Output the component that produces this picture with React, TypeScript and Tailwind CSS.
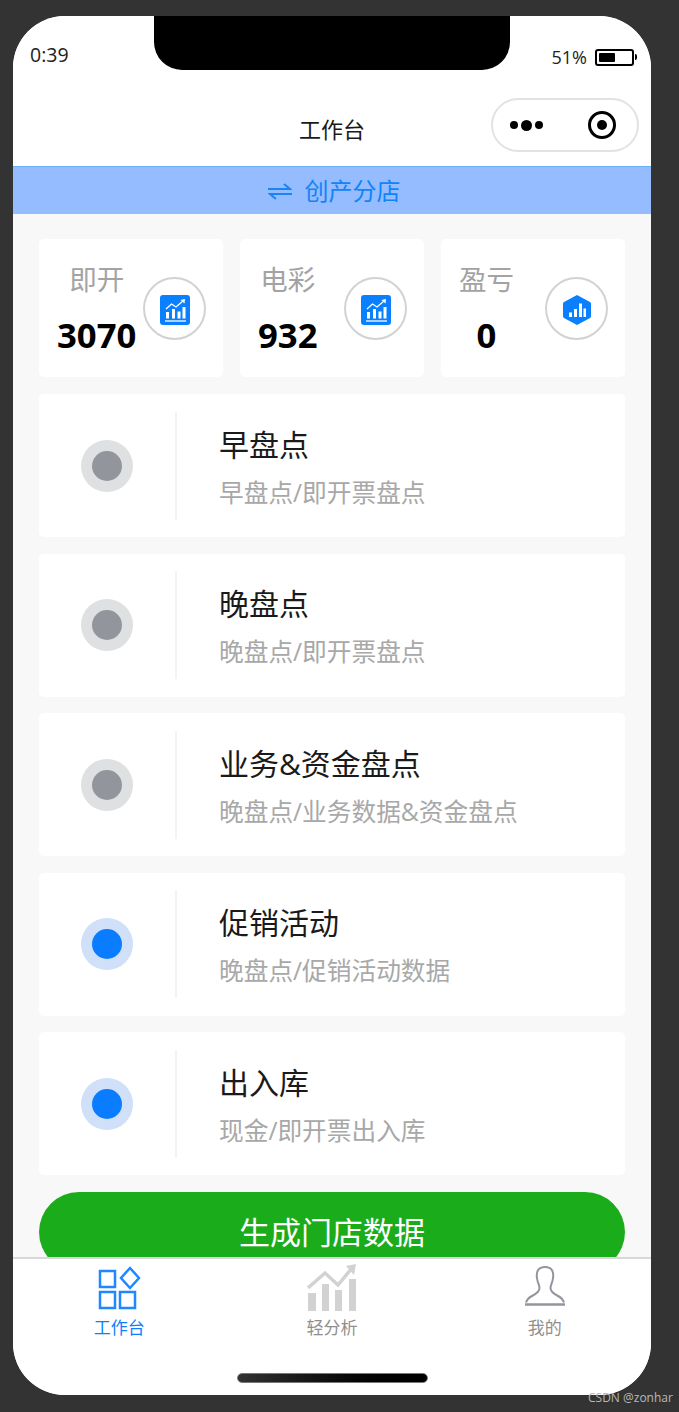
const font = { fontFamily: '"Open Sans", "Noto Sans CJK SC", sans-serif' }

const stats = [
  { label: "即开", value: "3070", icon: "square" },
  { label: "电彩", value: "932", icon: "square" },
  { label: "盈亏", value: "0", icon: "hex" },
]

const tasks = [
  { title: "早盘点", sub: "早盘点/即开票盘点", active: false },
  { title: "晚盘点", sub: "晚盘点/即开票盘点", active: false },
  { title: "业务&资金盘点", sub: "晚盘点/业务数据&资金盘点", active: false },
  { title: "促销活动", sub: "晚盘点/促销活动数据", active: true },
  { title: "出入库", sub: "现金/即开票出入库", active: true },
]

function SquareChart() {
  return (
    <svg width="30" height="30" viewBox="0 0 30 30">
      <rect width="30" height="30" rx="3" fill="#0a80ff" />
      <path d="M6 14 L11.500 9 L16 12 L23 6" fill="none" stroke="#fff" strokeWidth="1.300" />
      <path d="M20.500 5 L25 4 L24.500 8.500 Z" fill="#fff" />
      <path d="M6 17h3v6.500H6zM12 14h3v9.500h-3zM17.500 16.500h3v7h-3zM22.500 12h3v11.500h-3z" fill="#fff" />
      <path d="M5 26h21" stroke="#fff" strokeWidth="1.300" />
    </svg>
  )
}

function HexChart() {
  return (
    <svg width="30" height="32" viewBox="0 0 30 32">
      <path d="M15 1 L28 8 Q29 8.600 29 10 V22 Q29 23.400 28 24 L15 31 L2 24 Q1 23.400 1 22 V10 Q1 8.600 2 8 Z" fill="#0a80ff" />
      <path d="M7 18.500h3v4.500H7zM12 15h3v8h-3zM17 9.500h3v13.500h-3zM21.500 14.500h2.500v8.500h-2.500z" fill="#fff" />
    </svg>
  )
}

function StatCard({ label, value, icon }: { label: string; value: string; icon: string }) {
  return (
    <div className="flex h-[138px] flex-1 items-center justify-between rounded-[5px] bg-white pl-[18px] pr-[17px]">
      <div className="flex flex-col items-center pt-[6px]">
        <span className="text-[27.500px] leading-[34px] text-[#a3a3a3]">{label}</span>
        <span className="mt-[14px] text-[34.700px] font-bold leading-[48px] text-black">{value}</span>
      </div>
      <div className="flex h-[63px] w-[63px] shrink-0 items-center justify-center rounded-full border-2 border-[#d2d2d2] bg-white pt-[4px]">
        {icon === "hex" ? <HexChart /> : <SquareChart />}
      </div>
    </div>
  )
}

function TaskCard({ title, sub, active }: { title: string; sub: string; active: boolean }) {
  return (
    <div className="flex h-[143px] items-center rounded-[5px] bg-white">
      <div className="flex w-[136px] shrink-0 justify-center">
        <div
          className={`flex h-[52px] w-[52px] items-center justify-center rounded-full ${active ? "bg-[#cfe0f8]" : "bg-[#dfe0e2]"}`}
        >
          <div className={`h-[30px] w-[30px] rounded-full ${active ? "bg-[#0a7cff]" : "bg-[#93959d]"}`} />
        </div>
      </div>
      <div className="h-[108px] w-[2px] shrink-0 bg-[#f3f3f3]" />
      <div className="ml-[42px] flex flex-col pt-[2px]">
        <span className="text-[30px] leading-[44px] text-[#1a1a1a]">{title}</span>
        <span className="mt-[8px] text-[24.700px] leading-[36px] text-[#a8a8a8]">{sub}</span>
      </div>
    </div>
  )
}

function TabWork() {
  return (
    <svg width="44" height="44" viewBox="0 0 44 44" fill="none" stroke="#1f87ff" strokeWidth="2.500">
      <rect x="3" y="5" width="15" height="16" />
      <rect x="3" y="26" width="15" height="16" />
      <rect x="23" y="26" width="15" height="16" />
      <path d="M33 2 L42 12 L33 22 L24 12 Z" />
    </svg>
  )
}

function TabChart() {
  return (
    <svg width="50" height="50" viewBox="0 0 50 50" fill="#d2d2d2">
      <path d="M1 30h8v18H1zM15 21h7v27h-7zM28 27h7v21h-7zM42 16h7v32h-7z" />
      <path d="M1 25 L18 10 L31 22 L45 5" fill="none" stroke="#d2d2d2" strokeWidth="3.500" />
      <path d="M39 3 L49 1 L47 12 Z" />
    </svg>
  )
}

function TabUser() {
  return (
    <svg width="42" height="44" viewBox="0 0 42 44" fill="none" stroke="#93959d" strokeWidth="2">
      <path d="M21 1 C14 1 12 6 13 12 C13.500 17 15.500 19 15.500 22 C15.500 26 12 28 8 30 C5 31.500 3 33.500 2 36.500 M21 1 C28 1 30 6 29 12 C28.500 17 26.500 19 26.500 22 C26.500 26 30 28 34 30 C37 31.500 39 33.500 40 36.500" />
      <path d="M1 38.500 H41" strokeWidth="2.500" />
    </svg>
  )
}

function Header() {
  return (
    <header className="relative h-[150px] shrink-0 bg-white">
      {/* notch */}
      <div className="absolute left-[141px] top-0 h-[54px] w-[356px] rounded-b-[28px] bg-black" />
      <div className="flex items-start justify-between pl-[17px] pr-[14px] pt-[26px]">
        <span className="text-[19.500px] leading-[26px] text-[#222]">0:39</span>
        <div className="flex items-center gap-[8px] pt-[3px]">
          <span className="text-[18px] leading-[24px] text-[#222]">51%</span>
          <div className="flex items-center">
            <div className="h-[17px] w-[39px] rounded-[3px] border-2 border-black p-[2px]">
              <div className="h-full w-[16px] rounded-[1px] bg-black" />
            </div>
            <div className="ml-px h-[6px] w-[2px] rounded-r-[2px] bg-black" />
          </div>
        </div>
      </div>
      <div className="mt-[45px] flex justify-center">
        <span className="text-[22px] leading-[30px] text-[#1a1a1a]">工作台</span>
      </div>
      <div className="absolute right-[12px] top-[82px] flex h-[54px] w-[148px] items-center justify-between rounded-full border-2 border-[#e2e2e2] bg-white pl-[17px] pr-[21px]">
        <div className="flex items-center gap-[3px]">
          <div className="h-[8px] w-[8px] rounded-full bg-black" />
          <div className="h-[11px] w-[11px] rounded-full bg-black" />
          <div className="h-[8px] w-[8px] rounded-full bg-black" />
        </div>
        <div className="flex h-[28px] w-[28px] items-center justify-center rounded-full border-[3px] border-black">
          <div className="h-[10px] w-[10px] rounded-full bg-black" />
        </div>
      </div>
    </header>
  )
}

export default function App() {
  return (
    <div className="h-[1412px] w-[679px] overflow-hidden bg-[#333333] pl-[13px] pt-[16px]" style={font}>
      <div className="flex h-[1379px] w-[638px] flex-col overflow-hidden rounded-[52px] bg-white">
        <Header />

        <div className="flex h-[48px] shrink-0 items-center justify-center gap-[13px] border-t border-[#6cb2fb] bg-[#94bcff] pl-[4px]">
          <svg width="24" height="18" viewBox="0 0 24 18" fill="none" stroke="#1a86f5" strokeWidth="2">
            <path d="M0 7 H22 L16 2" />
            <path d="M24 12 H2 L8 17" />
          </svg>
          <span className="text-[24px] leading-[32px] text-[#1084f8]">创产分店</span>
        </div>

        <main className="h-[1043px] shrink-0 overflow-hidden bg-[#f8f8f8] px-[26px] pt-[25px]">
          <div className="flex gap-[17px]">
            {stats.map((s) => (
              <StatCard key={s.label} {...s} />
            ))}
          </div>
          <div className="mt-[17px] flex flex-col gap-[16.500px]">
            {tasks.map((t) => (
              <TaskCard key={t.title} {...t} />
            ))}
          </div>
          <div className="mt-[17px] flex h-[80px] items-center justify-center rounded-[40px] bg-[#1bac1b]">
            <span className="text-[31px] leading-[44px] text-white">生成门店数据</span>
          </div>
        </main>

        <nav className="flex flex-1 flex-col border-t-2 border-[#d8d8d8] bg-white">
          <div className="grid grid-cols-3 pt-[4px]">
            <div className="flex flex-col items-center">
              <div className="flex h-[50px] items-center">
                <TabWork />
              </div>
              <span className="mt-[3px] text-[17px] leading-[24px] text-[#0f7fff]">工作台</span>
            </div>
            <div className="flex flex-col items-center">
              <div className="flex h-[50px] items-center">
                <TabChart />
              </div>
              <span className="mt-[3px] text-[17px] leading-[24px] text-[#8f8f8f]">轻分析</span>
            </div>
            <div className="flex flex-col items-center">
              <div className="flex h-[50px] items-center">
                <TabUser />
              </div>
              <span className="mt-[3px] text-[17px] leading-[24px] text-[#8f8f8f]">我的</span>
            </div>
          </div>
          <div className="mt-[33px] flex justify-center">
            <div className="h-[10px] w-[191px] rounded-full border border-[#777] bg-gradient-to-r from-[#333333] to-black" />
          </div>
        </nav>
      </div>
      <div className="absolute left-[588px] top-[1390px] text-[12px] leading-[16px] text-[#b8b8b8]">CSDN @zonhar</div>
    </div>
  )
}
